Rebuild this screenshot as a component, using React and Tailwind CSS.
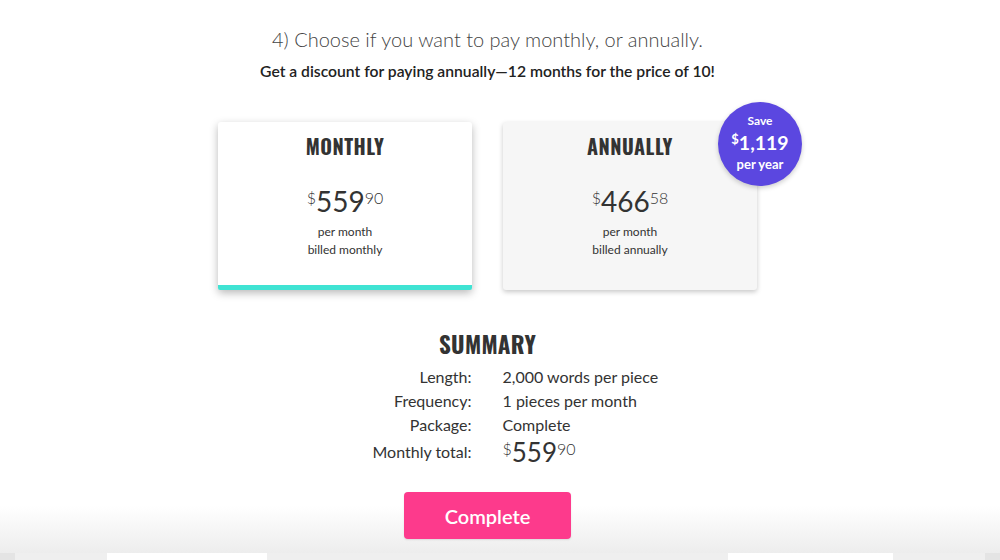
import React from "react";

const head = { fontFamily: '"Oswald", "Liberation Sans Narrow", "DejaVu Sans Condensed", "Roboto", sans-serif' };
const body = { fontFamily: 'Lato, "Open Sans", sans-serif' };

function Price({ whole, cents, big = "text-[28px]", small = "text-[16px]" }) {
  return (
    <div className="flex items-start justify-center text-[#333]">
      <span className={`${small} leading-[18px] mt-[4px] font-light`}>$</span>
      <span className={`${big} leading-[32px]`}>{whole}</span>
      <span className={`${small} leading-[18px] mt-[4px] font-light`}>{cents}</span>
    </div>
  );
}

function Card({ title, whole, cents, billed, selected, children }) {
  return (
    <div
      className={`relative flex flex-col w-[254px] h-[168px] rounded-[3px] ${
        selected
          ? "bg-white shadow-[0_3px_8px_rgba(0,0,0,0.28)]"
          : "bg-[#f6f6f6] shadow-[0_2px_5px_rgba(0,0,0,0.22)]"
      }`}
    >
      <div className="pt-[12px] text-center text-[20px] leading-[24px] font-bold tracking-[0.5px] text-[#333]" style={head}>
        {title}
      </div>
      <div className="mt-[27px]">
        <Price whole={whole} cents={cents} />
      </div>
      <div className="mt-[6px] text-center text-[12px] leading-[18px] text-[#333]">
        <div>per month</div>
        <div>{billed}</div>
      </div>
      <div className="flex-1" />
      {selected && <div className="h-[5px] bg-[#3fe3d3] rounded-b-[2px]" />}
      {children}
    </div>
  );
}

export default function App() {
  return (
    <div className="w-[1000px] h-[560px] overflow-hidden bg-white flex flex-col" style={body}>
      <div className="flex flex-col items-center pr-[25px]">
        <h1 className="pt-[26px] text-[20px] leading-[27px] font-light text-[#444]">
          4) Choose if you want to pay monthly, or annually.
        </h1>
        <p className="mt-[8px] text-[15.7px] leading-[20px] font-semibold text-[#222]">
          Get a discount for paying annually—12 months for the price of 10!
        </p>

        <div className="mt-[41px] flex gap-[31px]">
          <Card title="MONTHLY" whole="559" cents="90" billed="billed monthly" selected />
          <Card title="ANNUALLY" whole="466" cents="58" billed="billed annually">
            <div className="absolute top-[-20px] right-[-45px] w-[84px] h-[84px] rounded-full bg-[#5b47e0] shadow-[0_2px_5px_rgba(0,0,0,0.2)] flex flex-col items-center justify-center text-white font-bold">
              <div className="text-[12px] leading-[14px] -mt-[2px]">Save</div>
              <div className="flex items-start leading-[26px] mt-[2px]">
                <span className="text-[13px] leading-[16px] mt-[1px]">$</span>
                <span className="text-[19.5px]">1,119</span>
              </div>
              <div className="text-[13px] leading-[16px]">per year</div>
            </div>
          </Card>
        </div>

        <h2 className="mt-[39px] text-[23px] leading-[30px] font-bold tracking-[0.3px] text-[#333]" style={head}>
          SUMMARY
        </h2>
        <div className="mt-[6px] grid grid-cols-[253px_254px] gap-x-[31px] text-[16px] text-[#333]">
          <div className="text-right leading-[24px]">Length:</div>
          <div className="leading-[24px]">2,000 words per piece</div>
          <div className="text-right leading-[24px]">Frequency:</div>
          <div className="leading-[24px]">1 pieces per month</div>
          <div className="text-right leading-[24px]">Package:</div>
          <div className="leading-[24px]">Complete</div>
          <div className="text-right leading-[30px]">Monthly total:</div>
          <div className="flex items-start h-[30px] pt-[1px]">
            <span className="text-[16px] leading-[18px] mt-[2px] font-light">$</span>
            <span className="text-[26px] leading-[28px]">559</span>
            <span className="text-[16px] leading-[18px] mt-[2px] font-light">90</span>
          </div>
        </div>
      </div>

      <div className="flex-1 flex flex-col items-center bg-gradient-to-b from-white from-[45%] to-[#ededed]">
        <div className="pr-[25px] pt-[25px] flex justify-center w-full">
          <button className="w-[167px] h-[47px] rounded-[4px] bg-[#fd3a8c] text-white text-[20px] font-semibold shadow-[0_1px_2px_rgba(0,0,0,0.1)]">
            Complete
          </button>
        </div>
      </div>
      <div className="h-[7px] bg-[#efefef] flex">
        <div className="w-[15px] bg-[#e4e4e4]" />
        <div className="w-[92px]" />
        <div className="w-[160px] bg-white" />
        <div className="w-[461px]" />
        <div className="w-[165px] bg-white" />
        <div className="flex-1" />
        <div className="w-[15px] bg-[#e4e4e4]" />
      </div>
    </div>
  );
}
